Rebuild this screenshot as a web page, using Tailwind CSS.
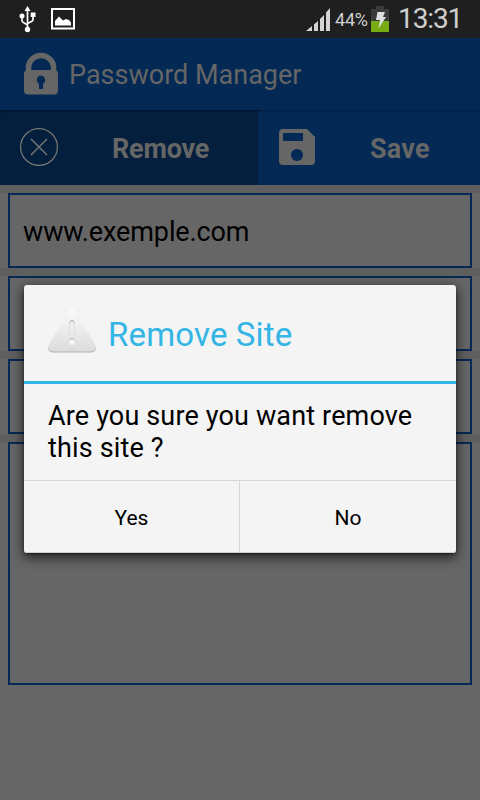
<!DOCTYPE html>
<html lang="en">
  <head>
    <meta charset="UTF-8" />
    <meta name="viewport" content="width=device-width, initial-scale=1.0" />
    <script src="https://cdn.jsdelivr.net/npm/@tailwindcss/browser@4"></script>
    <title>Password Manager</title>
  </head>
  <body class="w-[480px] h-[800px] overflow-hidden bg-[#666666] font-['Roboto',sans-serif] relative">
    <!-- status bar -->
    <div class="flex h-[38px] bg-[#1f1f1f] text-[#cfcfcf]">
      <svg class="w-[18px] h-[38px] ml-[18px]" viewBox="0 0 18 38" fill="none" stroke="#fff" stroke-width="1.7">
        <path d="M9.5 10v20M4 16v4.500q0 1.500 1.500 2l4 2.500M15 15v4.500q0 1.500-1.500 2l-4 2" />
        <path d="M9.500 6l3 5h-6z" fill="#fff" stroke="none" />
        <circle cx="4" cy="16" r="2.500" fill="#fff" stroke="none" />
        <circle cx="9.500" cy="29.500" r="2.700" fill="#fff" stroke="none" />
        <path d="M12.700 12.500h4.800v4.500h-4.800z" fill="#fff" stroke="none" />
      </svg>
      <svg class="w-6 h-[38px] ml-[15px]" viewBox="0 0 24 38">
        <path d="M1 9h22v19.500h-22z" fill="none" stroke="#fff" stroke-width="2" />
        <path d="M4 25.500V21l4-4.500 4 4 3-1.500 3 1 2 2.500v3z" fill="#fff" />
      </svg>
      <svg class="w-6 h-[38px] ml-[231px]" viewBox="0 0 24 38" fill="#d4d4d4">
        <path d="M0 31l6-5v5zM8 24.500l4-3.500v10H8zM14 19l4-4v16h-4zM20 12.500L24 8v23h-4z" />
      </svg>
      <span class="ml-[5px] w-9 text-[18px] leading-[40px] whitespace-nowrap tracking-[-0.2px]">44%</span>
      <svg class="w-[18px] h-[38px]" viewBox="0 0 18 38">
        <path d="M0 9h5V6h8v3h5v12H0z" fill="#3b3b3b" />
        <path d="M0 21h18v11H0z" fill="#79ab16" />
        <path d="M6.500 12h7.500l-2 5h3L7.500 28.500 9 20H5z" fill="#e0e0e0" />
      </svg>
      <span class="ml-[9px] text-[28px] leading-[37px] whitespace-nowrap tracking-[-1.1px]">13:31</span>
    </div>

    <!-- app header -->
    <div class="flex h-[72px] bg-[#032954] text-[#666666]">
      <svg class="w-[34px] h-[72px] ml-6" viewBox="0 0 34 72">
        <path d="M4.500 34V29.500a12.500 12 0 0 1 25 0V34" fill="none" stroke="#666666" stroke-width="5.500" />
        <path fill-rule="evenodd" fill="#666666" d="M4 32h26q4 0 4 4v16.500q0 4-4 4H4q-4 0-4-4V36q0-4 4-4zM17 37.500a4.500 4.500 0 0 0-2 8.300V51h4v-5.200a4.500 4.500 0 0 0-2-8.300z" />
      </svg>
      <span class="ml-[11px] text-[27px] leading-[75px] whitespace-nowrap">Password Manager</span>
    </div>

    <!-- actions -->
    <div class="flex h-[75px] text-[#666666] text-[27px] leading-[79px] font-bold">
      <div class="flex w-[258px] bg-[#041f3d] shadow-[inset_0_2px_2px_-1px_#00102a]">
        <svg class="w-10 h-[75px] ml-[19px]" viewBox="0 0 40 75" fill="none" stroke="#747474">
          <circle cx="20" cy="37" r="18.400" stroke-width="1.300" />
          <path d="M12 29l16 16M28 29L12 45" stroke-width="1.500" />
        </svg>
        <span class="ml-[53px] tracking-[-0.2px]">Remove</span>
      </div>
      <div class="flex w-[222px] bg-[#032954] shadow-[inset_0_2px_2px_-1px_#001c40]">
        <svg class="w-9 h-[75px] ml-[21px]" viewBox="0 0 36 75">
          <path fill-rule="evenodd" fill="#666666" d="M4 19h24l8 8v24q0 4-4 4H4q-4 0-4-4V23q0-4 4-4zM4 23v8h20v-8zM18 39a6 6 0 1 0 .01 0z" />
        </svg>
        <span class="ml-[55px] tracking-[0.2px]">Save</span>
      </div>
    </div>

    <!-- site form -->
    <div class="flex flex-col">
      <div class="h-2 bg-[#5f5f5f]"></div>
      <div class="mx-2 h-[75px] border-2 border-[#032954] pl-[13px] text-[27px] leading-[74px] tracking-[-0.12px] text-black">www.exemple.com</div>
      <div class="h-2 bg-[#5f5f5f]"></div>
      <div class="mx-2 h-[75px] border-2 border-[#032954]"></div>
      <div class="h-2 bg-[#5f5f5f]"></div>
      <div class="mx-2 h-[75px] border-2 border-[#032954]"></div>
      <div class="h-2 bg-[#5f5f5f]"></div>
      <div class="mx-2 h-[243px] border-2 border-[#032954]"></div>
    </div>

    <!-- confirm dialog -->
    <div class="absolute left-6 top-[285px] w-[432px] h-[268px] flex flex-col rounded-[3px] bg-[#f4f4f4] text-black shadow-[0_4px_12px_1px_rgba(0,0,0,0.65),0_1px_2px_rgba(0,0,0,0.5)]">
      <div class="flex h-[99px] border-b-3 border-[#33b5e5]">
        <svg class="w-12 h-[96px] ml-6" viewBox="0 0 48 96">
          <defs>
            <linearGradient id="warn" x1="0" y1="0" x2="0" y2="1">
              <stop offset="0" stop-color="#fbfbfb" />
              <stop offset="1" stop-color="#dcdcdc" />
            </linearGradient>
          </defs>
          <path d="M21.500 26q2.500-4 5 0L47 60.500q2.500 6.500-3.500 7H4.500q-6-.5-3.500-7z" fill="#b4b4b4" />
          <path d="M21.500 25q2.500-4 5 0L47 59.500q2.500 6.500-3.500 7H4.500q-6-.5-3.500-7z" fill="url(#warn)" />
          <rect x="21.500" y="35.500" width="5" height="15.500" rx="2.500" fill="#ececec" stroke="#dadada" stroke-width=".7" />
          <path d="M21.700 37.500q2.300-4 4.600 0" fill="none" stroke="#adadad" />
          <circle cx="24" cy="57" r="3" fill="#f4f4f4" />
          <path d="M21.200 55.500q2.800-4 5.600 0" fill="none" stroke="#adadad" />
        </svg>
        <span class="ml-3 text-[33px] leading-[99px] tracking-[0.15px] text-[#33b5e5]">Remove Site</span>
      </div>
      <div class="h-[96px] pl-6 pt-4 text-[27px] leading-8 tracking-[0.15px]">Are you sure you want remove<br />this site ?</div>
      <div class="flex h-[73px] border-t border-[#d6d6d6] text-[21px] leading-[74px] text-center rounded-b-[3px] shadow-[inset_0_-1px_0_#cfcfcf]">
        <div class="w-[216px] border-r border-[#d6d6d6]">Yes</div>
        <div class="w-[216px]">No</div>
      </div>
    </div>
  </body>
</html>
